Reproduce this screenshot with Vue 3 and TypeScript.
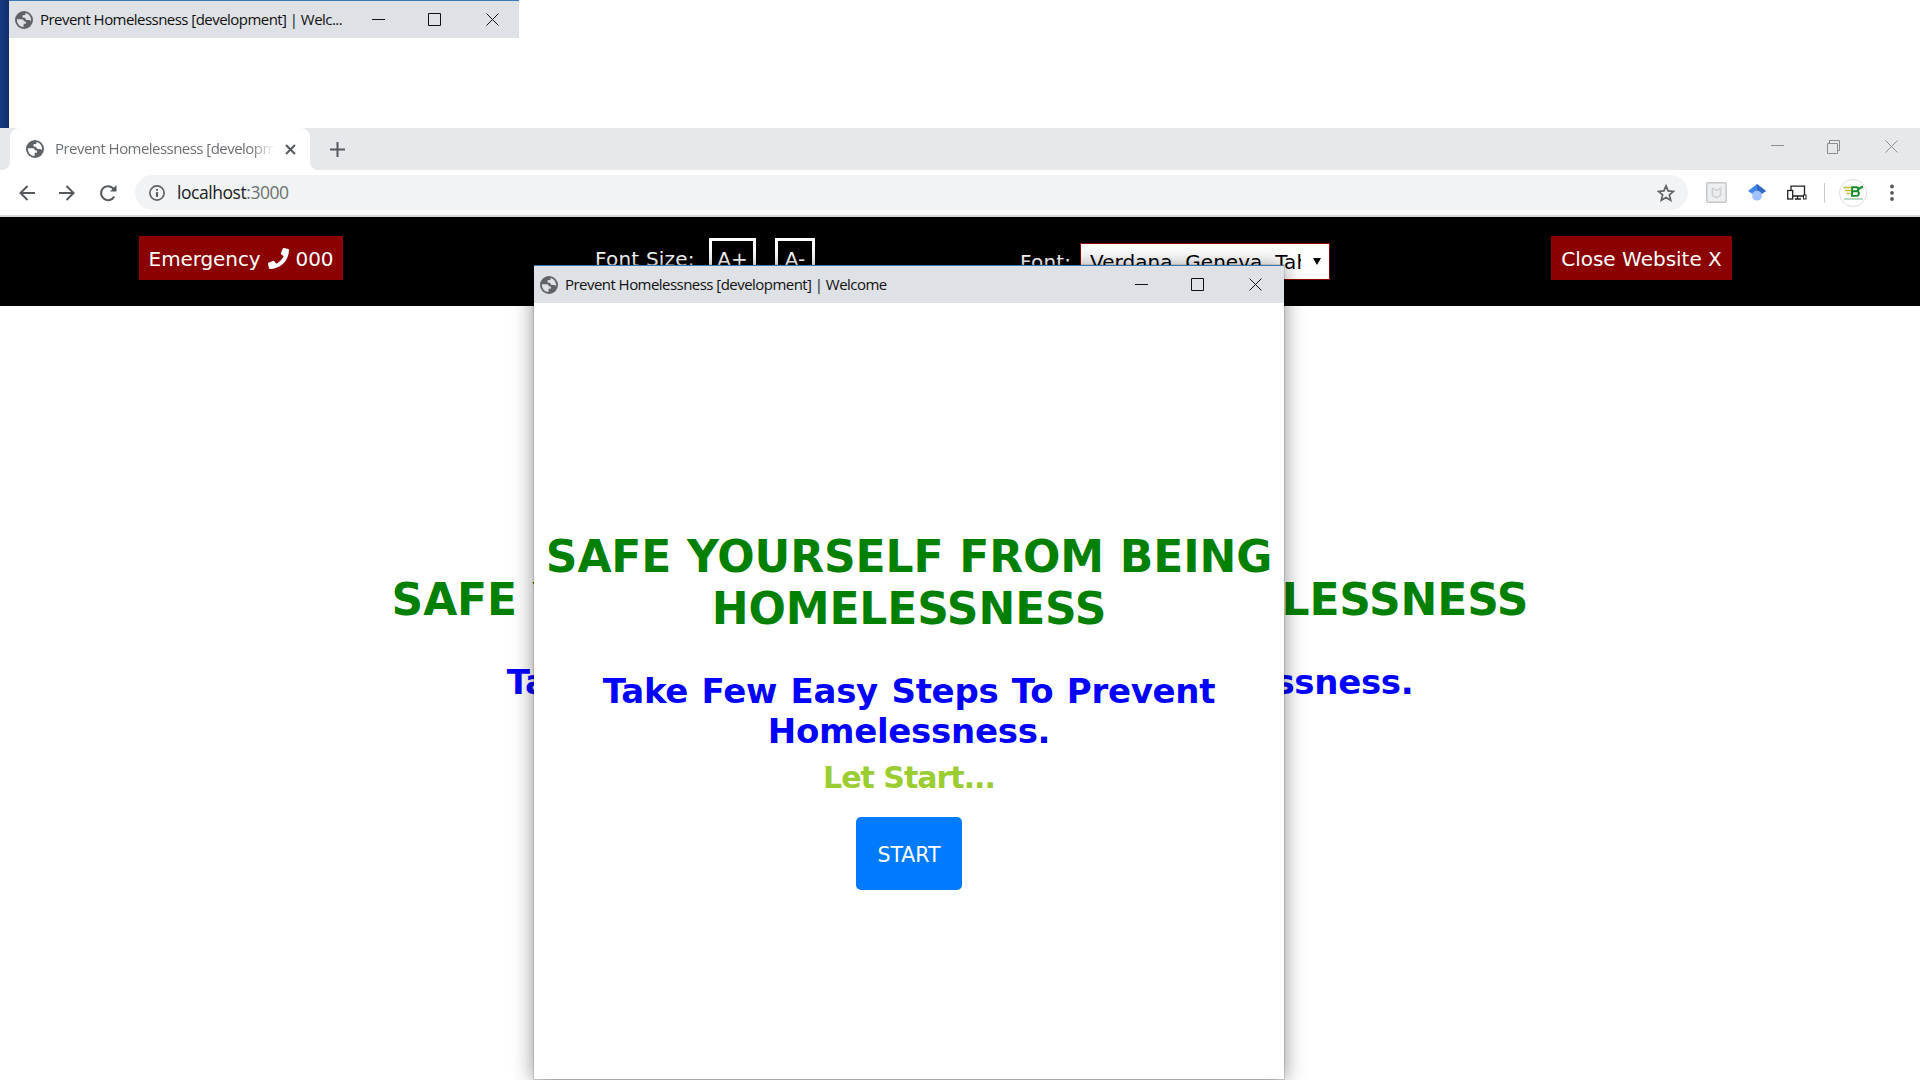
<script setup lang="ts">
interface Popup {
  id: string
  title: string
}
const popups: Popup[] = [
  { id: 'small', title: 'Prevent Homelessness [development] | Welc...' },
  { id: 'large', title: 'Prevent Homelessness [development] | Welcome' },
]
const headline = 'SAFE YOURSELF FROM BEING HOMELESSNESS'
const tagline = 'Take Few Easy Steps To Prevent Homelessness.'
</script>

<template>
  <div class="screen">
    <svg width="0" height="0" class="defs">
      <symbol id="globe" viewBox="0 0 18 18">
        <circle cx="9" cy="9" r="9" fill="#5f6368" />
        <path d="M1.900 8.300h4.800c1.500 0 2.200.9 2.200 2.200h2v2.200H8.600v3.400A7.100 7.100 0 0 1 1.900 8.300zM10.500 2.100c3.200.7 5.600 3.500 5.600 6.900l-.1 1.200c-.5-.9-1.200-1.300-2.400-1.300h-2.200L9.800 6.700l-2.300-.2.1-2.300 2.700-.3z" fill="currentColor" />
      </symbol>
    </svg>

    <div class="desktop"></div>

    <div class="tabs">
      <div class="prev-tab"></div>
      <div class="tab">
        <svg class="globe" width="18" height="18"><use href="#globe" /></svg>
        <span class="tab-title">Prevent Homelessness [development]</span>
        <svg width="11" height="11" viewBox="0 0 11 11"><path d="M1 1l9 9M10 1l-9 9" stroke="#55595d" stroke-width="2" /></svg>
      </div>
      <div class="tab-rest">
        <div class="new-tab">
          <svg width="15" height="15" viewBox="0 0 15 15"><path d="M7.500 0v15M0 7.500h15" stroke="#55595d" stroke-width="2" /></svg>
        </div>
        <svg class="frame-controls" width="128" height="14" viewBox="0 0 128 14" fill="none" stroke="#8b8e90">
          <path d="M0 5.500h13M56.500 3.500h10v10h-10zM58.500 3.500v-3h10v10h-2M114.500 .5l12 12M126.500 .5l-12 12" />
        </svg>
      </div>
    </div>

    <div class="toolbar">
      <svg class="nav" width="16" height="16" viewBox="0 0 16 16"><path d="M16 8H1.500M8.500 1L1.500 8l7 7" /></svg>
      <svg class="nav" width="16" height="16" viewBox="0 0 16 16"><path d="M0 8h14.500M7.500 1l7 7-7 7" /></svg>
      <svg class="nav" width="18" height="18" viewBox="0 0 18 18"><path d="M15.200 12.500A7 7 0 1 1 14 4.200l1.500 1.500" /><path d="M17.500 1v6.500H11z" fill="#55595d" stroke="none" /></svg>
      <div class="address">
        <svg width="16" height="16" viewBox="0 0 16 16" fill="none" stroke="#5f6368" stroke-width="1.700"><circle cx="8" cy="8" r="7.100" /><path d="M8 7v5M8 4v1.700" stroke-width="2" /></svg>
        <span class="url">localhost<i>:3000</i></span>
        <svg class="star" width="18" height="18" viewBox="0 0 18 18"><path d="M9 1.900l2.100 5 5.400.5-4.100 3.500 1.300 5.300L9 13.400l-4.700 2.800 1.300-5.300-4.100-3.500 5.400-.5z" fill="none" stroke="#5f6368" stroke-width="1.700" /></svg>
      </div>
      <svg class="ext shield" width="21" height="21" viewBox="0 0 21 21" fill="none"><rect x=".8" y=".8" width="19.400" height="19.400" rx="1" fill="#eeeff0" stroke="#c5c7c9" stroke-width="1.500" /><path d="M6.500 6.500l4 1.800 4-1.800v7l-4 2-4-2z" stroke="#d0d2d4" stroke-width="1.800" /></svg>
      <svg class="ext scholar" width="18" height="17" viewBox="0 0 18 17"><path d="M9 0L0 7l4.500 3C6 7 12 7 13.500 10L18 7z" fill="#4285f4" /><path d="M9 0l9 7-4.500 3C12.500 8 11 7.600 9 7.500z" fill="#356ac3" /><circle cx="9" cy="11.700" r="4.900" fill="#a0c3ff" /></svg>
      <svg class="ext devices" width="20" height="15" viewBox="0 0 20 15" fill="none" stroke="#222" stroke-width="1.300"><path d="M4 5V1.200h13.500V10M6 11h10.500M10.500 11v3M8 14h6" /><rect x=".7" y="5.500" width="5" height="8.500" /><rect x="16.500" y="10" width="2.500" height="4" stroke-width="1" /></svg>
      <span class="divider"></span>
      <svg class="avatar" width="28" height="28" viewBox="0 0 28 28">
        <circle cx="14" cy="14" r="13.500" fill="#fff" stroke="#dcdcdc" />
        <path d="M4.500 8.500h8M6 11.500h6M7.500 14.500h4" stroke="#c0b92c" stroke-width="1.500" />
        <path d="M13.200 8.300h4.300c2.600 0 2.600 3.900 0 3.900h-3.700h4c2.900 0 2.700 4.700-.3 4.700h-4.500z" fill="none" stroke="#178c2b" stroke-width="1.900" />
        <path d="M18.500 10.500l5.500-3" stroke="#178c2b" stroke-width="2" />
        <path d="M5 20h19" stroke="#8dbfa0" stroke-width="1.200" />
      </svg>
      <svg class="more" width="4" height="18" viewBox="0 0 4 18" fill="#55595d"><circle cx="2" cy="2.500" r="1.900" /><circle cx="2" cy="8.800" r="1.900" /><circle cx="2" cy="15" r="1.900" /></svg>
    </div>

    <header class="site-header">
      <button class="red emergency">
        <span>Emergency</span>
        <svg width="21" height="21" viewBox="0 0 512 512"><path fill="#fff" d="M493.400 24.600l-104-24c-11.300-2.600-22.900 3.300-27.500 13.900l-48 112c-4.200 9.800-1.400 21.300 6.900 28l60.600 49.600c-36 76.700-98.900 140.500-177.200 177.200l-49.600-60.600c-6.800-8.300-18.200-11.100-28-6.900l-112 48C3.900 366.500-2 378.100.6 389.400l24 104C27.100 504.200 36.700 512 48 512c256.100 0 464-207.500 464-464 0-11.200-7.700-20.900-18.600-23.400z" /></svg>
        <span>000</span>
      </button>
      <div class="sizes">
        <span class="size-label">Font Size:</span>
        <button class="size plus">A+</button>
        <button class="size minus">A-</button>
      </div>
      <div class="fonts">
        <span class="font-label">Font:</span>
        <div class="select"><span class="value">Verdana, Geneva, Tahoma</span><span class="arrow"></span></div>
      </div>
      <button class="red close">Close Website X</button>
    </header>

    <main class="page">
      <h1>{{ headline }}</h1>
      <h2>{{ tagline }}</h2>
    </main>

    <section v-for="p in popups" :key="p.id" class="popup" :class="p.id">
      <div class="titlebar">
        <svg class="globe" width="18" height="18"><use href="#globe" /></svg>
        <span class="title">{{ p.title }}</span>
        <svg class="controls" width="128" height="14" viewBox="0 0 128 14" fill="none" stroke="#111">
          <path d="M0 6.500h13M56.500 .5h12v12h-12zM114.500 .5l12 12M126.500 .5l-12 12" />
        </svg>
      </div>
      <div v-if="p.id === 'large'" class="welcome">
        <h1>{{ headline }}</h1>
        <h2>{{ tagline }}</h2>
        <h3>Let Start...</h3>
        <button class="start">START</button>
      </div>
    </section>
  </div>
</template>

<style>
body { margin: 0; overflow: hidden; }
</style>

<style scoped>
.screen { position: relative; width: 1920px; height: 1080px; overflow: hidden; display: flex; flex-direction: column; background: #fff; font-family: "DejaVu Sans", sans-serif; }
.screen * { box-sizing: border-box; }
.defs { position: absolute; }
svg { flex: none; display: block; }
button { border: 0; font: inherit; padding: 0; }
h1, h2, h3 { margin: 0; text-align: center; font-weight: 700; }

.desktop { width: 9px; height: 128px; background: linear-gradient(90deg, #153b83, #122e6b); flex: none; }

.tabs { height: 42px; flex: none; display: flex; background: linear-gradient(#e5e9ec 50%, #fff 50%); font-family: "Open Sans", sans-serif; }
.prev-tab { width: 10px; background: #e5e9ec; border-bottom-right-radius: 8px; }
.tab { width: 300px; background: #fff; border-radius: 9px 9px 0 0; display: flex; align-items: center; padding-left: 16px; }
.globe { color: #fff; }
.tab-title { width: 220px; margin: -2px 10px 0 11px; overflow: hidden; white-space: nowrap; font-size: 15px; letter-spacing: -.54px; color: #6d7073; -webkit-mask-image: linear-gradient(90deg, #000 195px, transparent 220px); mask-image: linear-gradient(90deg, #000 195px, transparent 220px); }
.tab-rest { flex: 1; display: flex; background: #e5e9ec; border-bottom-left-radius: 8px; }
.new-tab { display: flex; align-items: center; justify-content: center; width: 55px; }
.frame-controls { margin: 12px 21px 0 auto; }

.toolbar { height: 47px; flex: none; border-bottom: 2px solid #d7d9db; display: flex; align-items: center; padding: 0 0 0 19px; }
.nav { margin-right: 24px; fill: none; stroke: #55595d; stroke-width: 2; }
.nav:nth-child(3) { margin-right: 18px; }
.address { width: 1553px; height: 35px; border-radius: 18px; background: #f1f3f4; display: flex; align-items: center; padding: 0 13px 0 14px; }
.url { margin-left: 12px; margin-bottom: 2px; font-family: "Open Sans", sans-serif; font-size: 17.5px; letter-spacing: -.45px; color: #202124; }
.url i { font-style: normal; color: #6d7073; }
.star { margin-left: auto; }
.shield { margin-left: 18px; }
.scholar { margin-left: 21px; }
.devices { margin-left: 21px; }
.divider { width: 1px; height: 20px; background: #c8cacc; margin-left: 17px; }
.avatar { margin-left: 14px; }
.more { margin-left: 23px; }

.site-header { height: 89px; flex: none; background: #000; display: flex; align-items: flex-start; color: #fff; font-size: 20px; line-height: 24px; white-space: nowrap; }
.red { height: 44px; margin-top: 19px; padding-top: 1px; background: #8b0000; color: #fff; display: flex; align-items: center; justify-content: center; }
.emergency { width: 204px; margin-left: 139px; gap: 7px; letter-spacing: -.1px; }
.sizes { display: flex; margin-left: 252px; }
.size-label { width: 114px; margin-top: 30px; letter-spacing: .2px; }
.size { height: 46px; margin-top: 21px; padding-bottom: 5px; border: 3px solid #fff; background: #000; color: #fff; }
.plus { width: 47px; }
.minus { width: 40px; margin-left: 19px; }
.fonts { display: flex; margin-left: 205px; }
.font-label { width: 60px; margin-top: 33px; letter-spacing: .2px; }
.select { width: 250px; height: 37px; margin-top: 26px; border: 1px solid #8b0000; background: #fff; color: #000; display: flex; align-items: center; padding-left: 9px; }
.value { width: 211px; overflow: hidden; letter-spacing: .04px; }
.arrow { margin-left: 12px; border: 4px solid transparent; border-top: 7px solid #000; border-bottom: 0; }
.close { width: 181px; margin-left: 221px; }

h1 { color: #008000; font-size: 44px; line-height: 52px; letter-spacing: -.1px; word-spacing: .6px; }
h2 { color: #00f; font-size: 34px; line-height: 40px; letter-spacing: -.28px; word-spacing: 1.900px; }
h3 { color: #9acd32; font-size: 30px; line-height: 36px; letter-spacing: -1px; }
.page { padding-top: 268px; }
.page h2 { margin-top: 36px; letter-spacing: -.32px; }

.popup { position: absolute; background: #fff; }
.small { left: 9px; top: 0; width: 510px; height: 120px; }
.large { left: 534px; top: 265px; width: 750px; height: 814px; box-shadow: 0 2px 20px rgba(0, 0, 0, .45), 0 0 0 1px rgba(0, 0, 0, .12); }
.titlebar { height: 38px; background: #dee1e6; border-top: 1px solid #3a76b0; display: flex; align-items: center; font-family: "Open Sans", sans-serif; font-size: 15px; letter-spacing: -.54px; color: #111; padding: 0 19px 0 6px; }
.large .titlebar { padding-right: 21px; }
.titlebar .globe { color: #dee1e6; }
.title { margin-left: 7px; margin-bottom: 2px; white-space: nowrap; }
.controls { margin-left: auto; }
.welcome { padding-top: 228px; display: flex; flex-direction: column; align-items: center; }
.welcome h2 { margin-top: 36px; width: 700px; }
.welcome h3 { margin-top: 9px; }
.start { width: 106px; height: 73px; margin-top: 21px; padding-top: 2px; border-radius: 5px; background: #007bff; color: #fff; font-size: 20.5px; }
</style>
